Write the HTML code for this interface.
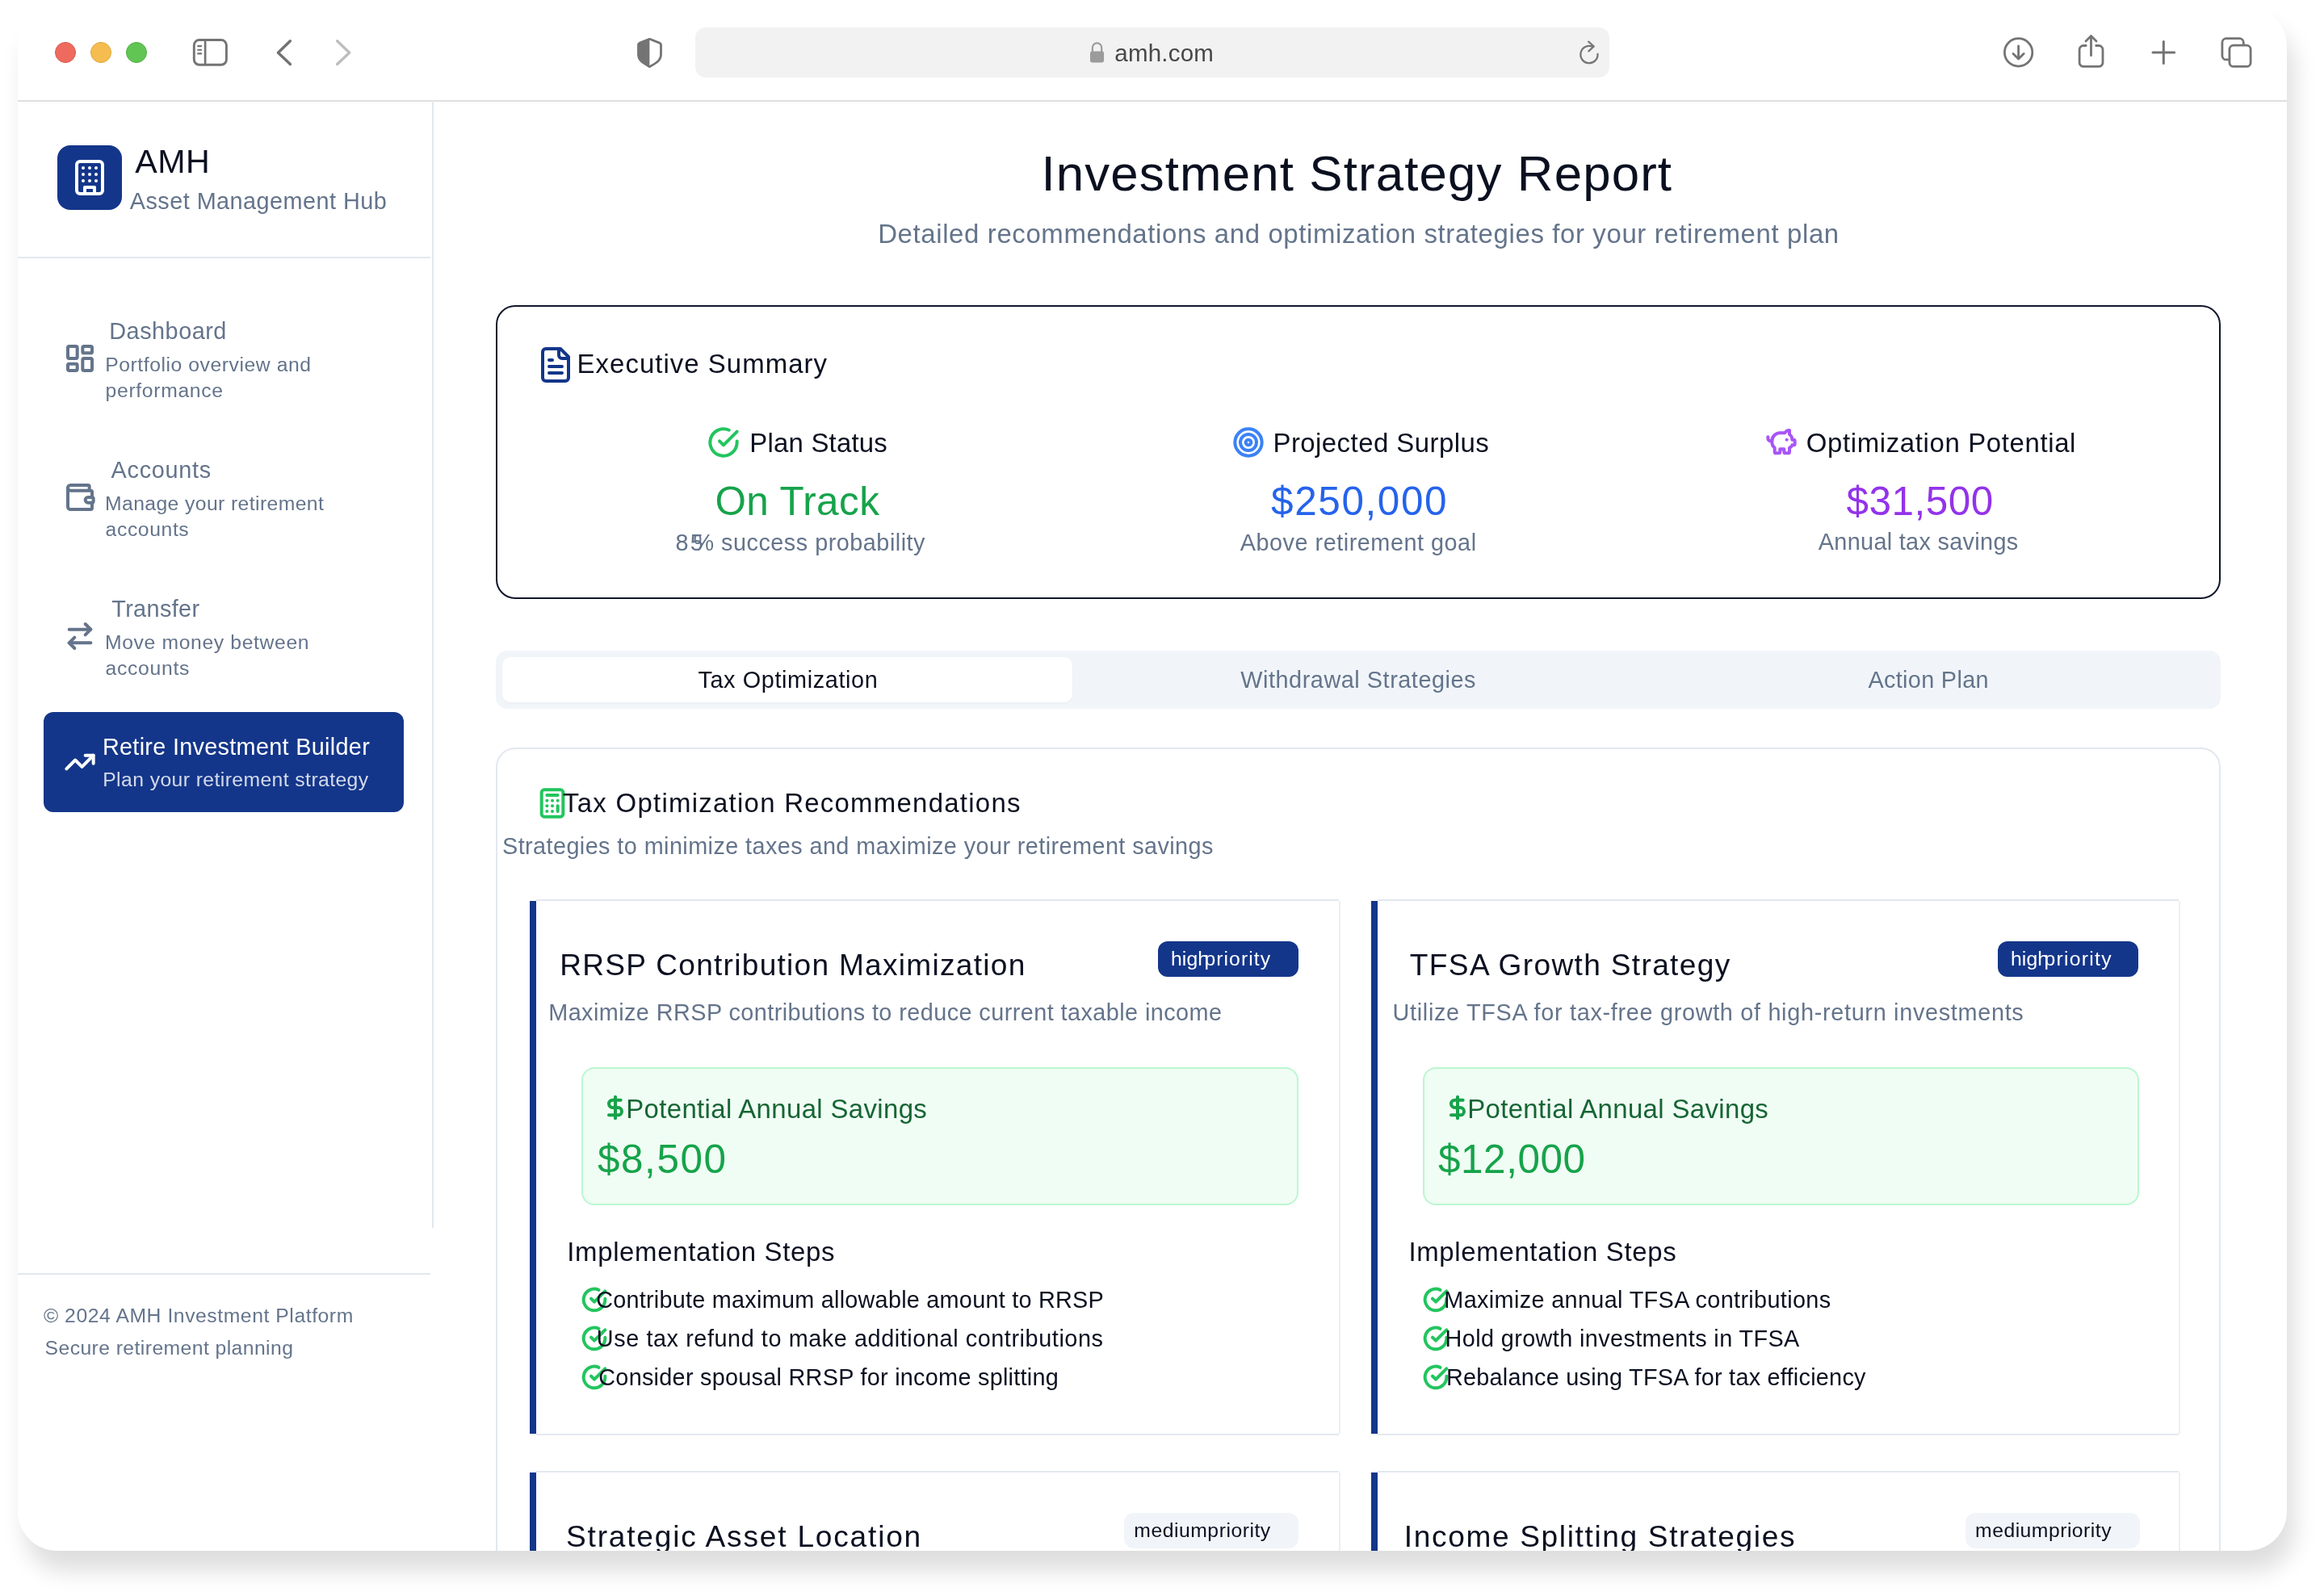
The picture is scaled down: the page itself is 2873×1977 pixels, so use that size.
<!DOCTYPE html>
<html lang="en">
<head>
<meta charset="utf-8">
<title>AMH - Investment Strategy Report</title>
<style>
html,body{margin:0;padding:0;background:#fff;}
body{width:2873px;height:1977px;position:relative;overflow:hidden;font-family:"Liberation Sans",sans-serif;}
#win{position:absolute;left:22px;top:8px;width:2810px;height:1913px;border-radius:49px;background:#fff;overflow:hidden;
  box-shadow:9px 25px 29px rgba(0,0,0,0.133);}
#g{position:absolute;left:-22px;top:-8px;width:2873px;height:1977px;will-change:transform;}
#g div,#g svg,#g span{position:absolute;box-sizing:border-box;}
.t{white-space:nowrap;line-height:1;font-family:"Liberation Sans",sans-serif;}
.ic{fill:none;stroke-linecap:round;stroke-linejoin:round;overflow:visible;}
.ln{background:#e2e8f0;}
.bar{background:#14368a;}
.lr{background:#ebeff5;}
.sav{border:2px solid #bbf7d0;background:#f0fdf4;border-radius:16px;}
.bh{background:#14368a;border-radius:12px;}
.bm{background:#f1f5f9;border-radius:12px;}
</style>
</head>
<body>
<div id="win"><div id="g">

<!-- ================= browser toolbar ================= -->
<div style="left:22px;top:123.5px;width:2810px;height:2px;background:#e0e0e0;"></div>
<div style="left:68px;top:52px;width:26px;height:26px;border-radius:50%;background:#ee6a5f;border:1px solid #d8564b;"></div>
<div style="left:112px;top:52px;width:26px;height:26px;border-radius:50%;background:#f5bd4f;border:1px solid #dea437;"></div>
<div style="left:156px;top:52px;width:26px;height:26px;border-radius:50%;background:#61c554;border:1px solid #4fad42;"></div>
<div style="left:861px;top:34px;width:1132px;height:62px;border-radius:13px;background:#f2f2f2;"></div>
<svg style="left:22px;top:8px;" width="2810" height="116" viewBox="22 8 2810 116" fill="none" stroke="#747474" stroke-linecap="round" stroke-linejoin="round">
  <!-- sidebar toggle -->
  <rect x="240.3" y="49.5" width="40.1" height="30.8" rx="6.5" stroke-width="2.9"/>
  <line x1="254.1" y1="49.5" x2="254.1" y2="80.3" stroke-width="2.7" stroke-linecap="butt"/>
  <line x1="245.1" y1="57.1" x2="249.2" y2="57.1" stroke-width="2.1"/>
  <line x1="245.1" y1="61.7" x2="249.2" y2="61.7" stroke-width="2.1"/>
  <line x1="245.1" y1="66.4" x2="249.2" y2="66.4" stroke-width="2.1"/>
  <!-- back / forward -->
  <polyline points="359.4,50.8 344.4,65.2 359.4,79.5" stroke-width="3.4" stroke="#727272"/>
  <polyline points="417.6,50.8 432.7,65.2 417.6,79.5" stroke-width="3.4" stroke="#bebebe"/>
  <!-- shield -->
  <path d="M804.4 48.3 L817.2 53.4 Q818.5 54 818.5 55.5 L818.5 67.5 C818.5 75 812 78.500 804.4 82.700 C796.800 78.500 790.500 75 790.500 67.500 L790.500 55.500 Q790.500 54 791.800 53.400 Z" stroke-width="2.8" stroke="#747474"/>
  <path d="M804.4 48.3 L791.8 53.4 Q790.5 54 790.5 55.5 L790.5 67.5 C790.5 75 796.800 78.500 804.400 82.700 Z" fill="#747474" stroke="none"/>
  <!-- lock -->
  <rect x="1350" y="63.6" width="17.1" height="13.9" rx="2.4" fill="#9b9b9b" stroke="none"/>
  <path d="M1352.9 64.500 V59 a5.650 5.650 0 0 1 11.300 0 V64.500" stroke="#9b9b9b" stroke-width="2.2"/>
  <!-- reload -->
  <path d="M1978.5 66.800 A10.600 10.600 0 1 1 1972.200 57.900" stroke-width="2.3" stroke="#767676"/>
  <polyline points="1967.2,51.7 1973.8,57.5 1967.4,63.4" stroke-width="2.3" stroke="#767676"/>
  <!-- download -->
  <circle cx="2499.6" cy="64.9" r="17.2" stroke-width="2.8"/>
  <line x1="2499.6" y1="56.9" x2="2499.6" y2="72.6" stroke-width="2.8"/>
  <polyline points="2493,66.6 2499.6,73.1 2506.2,66.6" stroke-width="2.8"/>
  <!-- share -->
  <path d="M2583.2 56.500 H2580.100 a5 5 0 0 0 -5 5 V77.400 a5 5 0 0 0 5 5 H2599 a5 5 0 0 0 5 -5 V61.500 a5 5 0 0 0 -5 -5 H2595.700" stroke-width="2.8"/>
  <line x1="2589.5" y1="45" x2="2589.5" y2="68.8" stroke-width="2.8"/>
  <polyline points="2583,51 2589.5,44.600 2596,51" stroke-width="2.8"/>
  <!-- plus -->
  <line x1="2666" y1="65.1" x2="2692.6" y2="65.1" stroke-width="3"/>
  <line x1="2679.3" y1="51.6" x2="2679.3" y2="78.4" stroke-width="3"/>
  <!-- tabs -->
  <rect x="2751.9" y="47.7" width="26.4" height="26.2" rx="5" stroke-width="2.8"/>
  <rect x="2760.9" y="56.2" width="26.2" height="26.2" rx="5" stroke-width="2.8" fill="#fff"/>
</svg>

<!-- ================= sidebar ================= -->
<div class="ln" style="left:534.5px;top:125px;width:2px;height:1395.5px;"></div>
<div class="ln" style="left:22px;top:318px;width:510.5px;height:2px;"></div>
<div class="ln" style="left:22px;top:1577px;width:510.5px;height:2px;"></div>
<div style="left:71px;top:180px;width:80px;height:80px;border-radius:16px;background:#14368a;"></div>
<svg class="ic" style="left:86.75px;top:196.25px;" width="48" height="48" viewBox="0 0 24 24" stroke-width="2" stroke="#fff"><rect width="16" height="20" x="4" y="2" rx="2" ry="2"/><path d="M9 22v-4h6v4"/><path d="M8 6h.01"/><path d="M16 6h.01"/><path d="M12 6h.01"/><path d="M12 10h.01"/><path d="M12 14h.01"/><path d="M16 10h.01"/><path d="M16 14h.01"/><path d="M8 10h.01"/><path d="M8 14h.01"/></svg>
<!-- nav icons -->
<svg class="ic" style="left:78.5px;top:424px;" width="40" height="40" viewBox="0 0 24 24" stroke-width="2.4" stroke="#64748b"><rect width="7" height="9" x="3" y="3" rx="1"/><rect width="7" height="5" x="14" y="3" rx="1"/><rect width="7" height="9" x="14" y="12" rx="1"/><rect width="7" height="5" x="3" y="16" rx="1"/></svg>
<svg class="ic" style="left:78.8px;top:595.8px;" width="40" height="40" viewBox="0 0 24 24" stroke-width="2.4" stroke="#64748b"><path d="M19 7V4a1 1 0 0 0-1-1H5a2 2 0 0 0 0 4h15a1 1 0 0 1 1 1v4h-3a2 2 0 0 0 0 4h3a1 1 0 0 0 1-1v-2a1 1 0 0 0-1-1"/><path d="M3 5v14a2 2 0 0 0 2 2h15a1 1 0 0 0 1-1v-4"/></svg>
<svg class="ic" style="left:78.5px;top:768px;" width="40" height="40" viewBox="0 0 24 24" stroke-width="2.4" stroke="#64748b"><path d="m16 3 4 4-4 4"/><path d="M20 7H4"/><path d="m8 21-4-4 4-4"/><path d="M4 17h16"/></svg>
<div style="left:54px;top:882px;width:446px;height:124px;border-radius:12px;background:#14368a;"></div>
<svg class="ic" style="left:78.8px;top:923.8px;" width="40" height="40" viewBox="0 0 24 24" stroke-width="2.4" stroke="#fff"><polyline points="22 7 13.5 15.5 8.5 10.5 2 17"/><polyline points="16 7 22 7 22 13"/></svg>

<!-- ================= executive summary ================= -->
<div style="left:614px;top:378px;width:2136px;height:364px;border:2px solid #10172a;border-radius:24px;"></div>
<svg class="ic" style="left:664px;top:428px;" width="48" height="48" viewBox="0 0 24 24" stroke-width="2" stroke="#14368a"><path d="M15 2H6a2 2 0 0 0-2 2v16a2 2 0 0 0 2 2h12a2 2 0 0 0 2-2V7Z"/><path d="M14 2v4a2 2 0 0 0 2 2h4"/><path d="M10 9H8"/><path d="M16 13H8"/><path d="M16 17H8"/></svg>
<svg class="ic" style="left:876px;top:528px;" width="40" height="40" viewBox="0 0 24 24" stroke-width="2.4" stroke="#22c55e"><path d="M22 11.08V12a10 10 0 1 1-5.93-9.14"/><path d="m9 11 3 3L22 4"/></svg>
<svg class="ic" style="left:1525.7px;top:527.8px;" width="40" height="40" viewBox="0 0 24 24" stroke-width="2.4" stroke="#3b82f6"><circle cx="12" cy="12" r="10"/><circle cx="12" cy="12" r="6"/><circle cx="12" cy="12" r="2"/></svg>
<svg class="ic" style="left:2186px;top:527.9px;" width="40" height="40" viewBox="0 0 24 24" stroke-width="2.4" stroke="#a855f7"><path d="M11 17h3v2a1 1 0 0 0 1 1h2a1 1 0 0 0 1-1v-3a3.16 3.16 0 0 0 2-2h1a1 1 0 0 0 1-1v-2a1 1 0 0 0-1-1h-1a5 5 0 0 0-2-4V3a4 4 0 0 0-3.2 1.6l-.3.4H11a6 6 0 0 0-6 6v1a5 5 0 0 0 2 4v3a1 1 0 0 0 1 1h2a1 1 0 0 0 1-1z"/><path d="M16 10h.01"/><path d="M2 8v1a2 2 0 0 0 2 2h1"/></svg>

<!-- ================= tabs ================= -->
<div style="left:614px;top:806px;width:2136px;height:72px;border-radius:14px;background:#f1f5f9;"></div>
<div style="left:622px;top:814px;width:706px;height:56px;border-radius:10px;background:#fff;box-shadow:0 1px 3px rgba(0,0,0,0.04);"></div>

<!-- ================= recommendations ================= -->
<div style="left:614px;top:926px;width:2136px;height:1100px;border:2px solid #e2e8f0;border-radius:24px;"></div>
<svg class="ic" style="left:664px;top:975px;" width="40" height="40" viewBox="0 0 24 24" stroke-width="2.4" stroke="#22c55e"><rect width="16" height="20" x="4" y="2" rx="2"/><line x1="8" x2="16" y1="6" y2="6"/><line x1="16" x2="16" y1="14" y2="18"/><path d="M16 10h.01"/><path d="M12 10h.01"/><path d="M8 10h.01"/><path d="M12 14h.01"/><path d="M8 14h.01"/><path d="M12 18h.01"/><path d="M8 18h.01"/></svg>

<!-- card 1 -->
<div class="bar" style="left:656px;top:1116px;width:8px;height:660px;"></div><div class="ln" style="left:664px;top:1114px;width:994px;height:2px;"></div><div class="ln" style="left:664px;top:1776px;width:994px;height:2px;"></div><div class="lr" style="left:1658px;top:1116px;width:2px;height:660px;"></div>
<div class="bh" style="left:1434px;top:1166px;width:174px;height:44px;"></div>
<div class="sav" style="left:720px;top:1322px;width:888px;height:171px;"></div>
<svg class="ic" style="left:745.5px;top:1356px;" width="32" height="32" viewBox="0 0 24 24" stroke-width="3" stroke="#16a34a"><line x1="12" x2="12" y1="2" y2="22"/><path d="M17 5H9.5a3.5 3.5 0 0 0 0 7h5a3.5 3.5 0 0 1 0 7H6"/></svg>
<svg class="ic ck" style="left:720px;top:1594px;" width="32" height="32" viewBox="0 0 24 24" stroke-width="3" stroke="#22c55e"><path d="M22 11.08V12a10 10 0 1 1-5.93-9.14"/><path d="m9 11 3 3L22 4"/></svg>
<svg class="ic ck" style="left:720px;top:1642px;" width="32" height="32" viewBox="0 0 24 24" stroke-width="3" stroke="#22c55e"><path d="M22 11.08V12a10 10 0 1 1-5.93-9.14"/><path d="m9 11 3 3L22 4"/></svg>
<svg class="ic ck" style="left:720px;top:1690px;" width="32" height="32" viewBox="0 0 24 24" stroke-width="3" stroke="#22c55e"><path d="M22 11.08V12a10 10 0 1 1-5.93-9.14"/><path d="m9 11 3 3L22 4"/></svg>

<!-- card 2 -->
<div class="bar" style="left:1698px;top:1116px;width:8px;height:660px;"></div><div class="ln" style="left:1706px;top:1114px;width:992px;height:2px;"></div><div class="ln" style="left:1706px;top:1776px;width:992px;height:2px;"></div><div class="lr" style="left:2698px;top:1116px;width:2px;height:660px;"></div>
<div class="bh" style="left:2474px;top:1166px;width:174px;height:44px;"></div>
<div class="sav" style="left:1762px;top:1322px;width:887px;height:171px;"></div>
<svg class="ic" style="left:1788.6px;top:1356px;" width="32" height="32" viewBox="0 0 24 24" stroke-width="3" stroke="#16a34a"><line x1="12" x2="12" y1="2" y2="22"/><path d="M17 5H9.5a3.5 3.5 0 0 0 0 7h5a3.5 3.5 0 0 1 0 7H6"/></svg>
<svg class="ic ck" style="left:1762px;top:1594px;" width="32" height="32" viewBox="0 0 24 24" stroke-width="3" stroke="#22c55e"><path d="M22 11.08V12a10 10 0 1 1-5.93-9.14"/><path d="m9 11 3 3L22 4"/></svg>
<svg class="ic ck" style="left:1762px;top:1642px;" width="32" height="32" viewBox="0 0 24 24" stroke-width="3" stroke="#22c55e"><path d="M22 11.08V12a10 10 0 1 1-5.93-9.14"/><path d="m9 11 3 3L22 4"/></svg>
<svg class="ic ck" style="left:1762px;top:1690px;" width="32" height="32" viewBox="0 0 24 24" stroke-width="3" stroke="#22c55e"><path d="M22 11.08V12a10 10 0 1 1-5.93-9.14"/><path d="m9 11 3 3L22 4"/></svg>

<!-- card 3 / 4 (cut by window bottom) -->
<div class="bar" style="left:656px;top:1824px;width:8px;height:660px;"></div><div class="ln" style="left:664px;top:1822px;width:994px;height:2px;"></div><div class="ln" style="left:664px;top:2484px;width:994px;height:2px;"></div><div class="lr" style="left:1658px;top:1824px;width:2px;height:660px;"></div>
<div class="bm" style="left:1392px;top:1874px;width:216px;height:44px;"></div>
<div class="bar" style="left:1698px;top:1824px;width:8px;height:660px;"></div><div class="ln" style="left:1706px;top:1822px;width:992px;height:2px;"></div><div class="ln" style="left:1706px;top:2484px;width:992px;height:2px;"></div><div class="lr" style="left:2698px;top:1824px;width:2px;height:660px;"></div>
<div class="bm" style="left:2434px;top:1874px;width:216px;height:44px;"></div>

<!-- ================= text ================= -->
<span class="t" style="left:1380.32px;top:51.00px;font-size:29.50px;letter-spacing:0.217px;color:#474747;">amh.com</span>
<span class="t" style="left:167.20px;top:180.00px;font-size:41.20px;letter-spacing:0.566px;color:#0b1020;">AMH</span>
<span class="t" style="left:160.80px;top:235.00px;font-size:28.84px;letter-spacing:0.455px;color:#64748b;">Asset Management Hub</span>
<span class="t" style="left:135.29px;top:396.00px;font-size:28.84px;letter-spacing:0.507px;color:#64748b;">Dashboard</span>
<span class="t" style="left:130.22px;top:440.00px;font-size:24.72px;letter-spacing:0.554px;color:#64748b;">Portfolio overview and</span>
<span class="t" style="left:130.59px;top:472.00px;font-size:24.72px;letter-spacing:0.672px;color:#64748b;">performance</span>
<span class="t" style="left:137.60px;top:568.00px;font-size:28.84px;letter-spacing:0.705px;color:#64748b;">Accounts</span>
<span class="t" style="left:130.02px;top:612.00px;font-size:24.72px;letter-spacing:0.400px;color:#64748b;">Manage your retirement</span>
<span class="t" style="left:130.61px;top:644.00px;font-size:24.72px;letter-spacing:0.593px;color:#64748b;">accounts</span>
<span class="t" style="left:138.22px;top:740.00px;font-size:28.84px;letter-spacing:0.376px;color:#64748b;">Transfer</span>
<span class="t" style="left:130.02px;top:784.00px;font-size:24.72px;letter-spacing:0.631px;color:#64748b;">Move money between</span>
<span class="t" style="left:130.51px;top:816.00px;font-size:24.72px;letter-spacing:0.707px;color:#64748b;">accounts</span>
<span class="t" style="left:126.89px;top:911.00px;font-size:28.84px;letter-spacing:0.300px;color:#ffffff;">Retire Investment Builder</span>
<span class="t" style="left:127.22px;top:954.00px;font-size:24.72px;letter-spacing:0.413px;color:#d3daeb;">Plan your retirement strategy</span>
<span class="t" style="left:53.93px;top:1618.00px;font-size:24.72px;letter-spacing:0.557px;color:#64748b;">© 2024 AMH Investment Platform</span>
<span class="t" style="left:55.59px;top:1658.00px;font-size:24.72px;letter-spacing:0.422px;color:#64748b;">Secure retirement planning</span>
<span class="t" style="left:1289.44px;top:184.00px;font-size:61.80px;letter-spacing:1.135px;color:#0b1020;">Investment Strategy Report</span>
<span class="t" style="left:1087.16px;top:274.00px;font-size:32.96px;letter-spacing:0.619px;color:#64748b;">Detailed recommendations and optimization strategies for your retirement plan</span>
<span class="t" style="left:714.56px;top:435.00px;font-size:32.96px;letter-spacing:1.026px;color:#0b1020;">Executive Summary</span>
<span class="t" style="left:928.36px;top:533.00px;font-size:32.96px;letter-spacing:0.190px;color:#0b1020;">Plan Status</span>
<span class="t" style="left:885.38px;top:596.00px;font-size:49.44px;letter-spacing:0.421px;color:#16a34a;">On Track</span>
<span class="t" style="left:836.60px;top:658.00px;font-size:28.84px;letter-spacing:2.039px;color:#64748b;">85</span>
<span class="t" style="left:858.49px;top:658.00px;font-size:28.84px;letter-spacing:0.491px;color:#64748b;">% success probability</span>
<span class="t" style="left:1576.46px;top:533.00px;font-size:32.96px;letter-spacing:0.448px;color:#0b1020;">Projected Surplus</span>
<span class="t" style="left:1574.11px;top:596.00px;font-size:49.44px;letter-spacing:1.594px;color:#2563eb;">$250,000</span>
<span class="t" style="left:1535.80px;top:658.00px;font-size:28.84px;letter-spacing:0.511px;color:#64748b;">Above retirement goal</span>
<span class="t" style="left:2236.82px;top:533.00px;font-size:32.96px;letter-spacing:0.623px;color:#0b1020;">Optimization Potential</span>
<span class="t" style="left:2286.61px;top:596.00px;font-size:49.44px;letter-spacing:0.500px;color:#9333ea;">$31,500</span>
<span class="t" style="left:2251.80px;top:657.00px;font-size:28.84px;letter-spacing:0.318px;color:#64748b;">Annual tax savings</span>
<span class="t" style="left:864.42px;top:828.00px;font-size:28.84px;letter-spacing:0.615px;color:#0b1020;">Tax Optimization</span>
<span class="t" style="left:1536.26px;top:828.00px;font-size:28.84px;letter-spacing:0.544px;color:#64748b;">Withdrawal Strategies</span>
<span class="t" style="left:2313.40px;top:828.00px;font-size:28.84px;letter-spacing:0.334px;color:#64748b;">Action Plan</span>
<span class="t" style="left:697.04px;top:979.00px;font-size:32.96px;letter-spacing:1.258px;color:#0b1020;">Tax Optimization Recommendations</span>
<span class="t" style="left:622.00px;top:1034.00px;font-size:28.84px;letter-spacing:0.413px;color:#64748b;">Strategies to minimize taxes and maximize your retirement savings</span>
<span class="t" style="left:693.23px;top:1177.00px;font-size:37.08px;letter-spacing:1.270px;color:#0b1020;">RRSP Contribution Maximization</span>
<span class="t" style="left:679.19px;top:1240.00px;font-size:28.84px;letter-spacing:0.426px;color:#64748b;">Maximize RRSP contributions to reduce current taxable income</span>
<span class="t" style="left:775.26px;top:1358.00px;font-size:32.96px;letter-spacing:0.347px;color:#166534;">Potential Annual Savings</span>
<span class="t" style="left:739.91px;top:1411.00px;font-size:49.44px;letter-spacing:1.588px;color:#16a34a;">$8,500</span>
<span class="t" style="left:702.23px;top:1535.00px;font-size:32.96px;letter-spacing:0.663px;color:#0b1020;">Implementation Steps</span>
<span class="t" style="left:738.16px;top:1596.00px;font-size:28.84px;letter-spacing:0.242px;color:#0b1020;">Contribute maximum allowable amount to RRSP</span>
<span class="t" style="left:738.84px;top:1644.00px;font-size:28.84px;letter-spacing:0.570px;color:#0b1020;">Use tax refund to make additional contributions</span>
<span class="t" style="left:741.26px;top:1692.00px;font-size:28.84px;letter-spacing:0.266px;color:#0b1020;">Consider spousal RRSP for income splitting</span>
<span class="t" style="left:1745.86px;top:1177.00px;font-size:37.08px;letter-spacing:1.340px;color:#0b1020;">TFSA Growth Strategy</span>
<span class="t" style="left:1724.54px;top:1240.00px;font-size:28.84px;letter-spacing:0.689px;color:#64748b;">Utilize TFSA for tax-free growth of high-return investments</span>
<span class="t" style="left:1817.16px;top:1358.00px;font-size:32.96px;letter-spacing:0.352px;color:#166534;">Potential Annual Savings</span>
<span class="t" style="left:1781.01px;top:1411.00px;font-size:49.44px;letter-spacing:0.550px;color:#16a34a;">$12,000</span>
<span class="t" style="left:1744.43px;top:1535.00px;font-size:32.96px;letter-spacing:0.658px;color:#0b1020;">Implementation Steps</span>
<span class="t" style="left:1788.29px;top:1596.00px;font-size:28.84px;letter-spacing:0.349px;color:#0b1020;">Maximize annual TFSA contributions</span>
<span class="t" style="left:1789.59px;top:1644.00px;font-size:28.84px;letter-spacing:0.380px;color:#0b1020;">Hold growth investments in TFSA</span>
<span class="t" style="left:1790.89px;top:1692.00px;font-size:28.84px;letter-spacing:0.250px;color:#0b1020;">Rebalance using TFSA for tax efficiency</span>
<span class="t" style="left:1449.97px;top:1176.00px;font-size:24.72px;letter-spacing:0.139px;color:#ffffff;">high</span>
<span class="t" style="left:1491.39px;top:1176.00px;font-size:24.72px;letter-spacing:1.092px;color:#ffffff;">priority</span>
<span class="t" style="left:2489.97px;top:1176.00px;font-size:24.72px;letter-spacing:0.139px;color:#ffffff;">high</span>
<span class="t" style="left:2531.39px;top:1176.00px;font-size:24.72px;letter-spacing:1.278px;color:#ffffff;">priority</span>
<span class="t" style="left:1404.29px;top:1884.00px;font-size:24.72px;letter-spacing:0.528px;color:#0b1020;">mediumpriority</span>
<span class="t" style="left:2446.09px;top:1884.00px;font-size:24.72px;letter-spacing:0.490px;color:#0b1020;">mediumpriority</span>
<span class="t" style="left:701.03px;top:1885.00px;font-size:37.08px;letter-spacing:1.800px;color:#0b1020;">Strategic Asset Location</span>
<span class="t" style="left:1738.86px;top:1885.00px;font-size:37.08px;letter-spacing:1.637px;color:#0b1020;">Income Splitting Strategies</span>

</div></div>
</body>
</html>
